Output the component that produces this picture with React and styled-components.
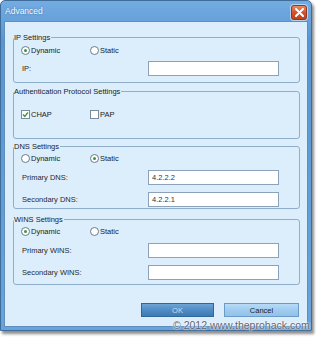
import React from "react";
import styled, { createGlobalStyle } from "styled-components";

const Global = createGlobalStyle`
  html, body {
    margin: 0;
    padding: 0;
    background: #fff;
  }
  body {
    font-family: "Liberation Sans", Arial, sans-serif;
  }
`;

const Page = styled.div`
  width: 316px;
  height: 337px;
  position: relative;
  overflow: hidden;
`;

const Window = styled.div`
  width: 312px;
  height: 331px;
  box-sizing: border-box;
  border: 1px solid #3e6d9c;
  border-radius: 5px 5px 0 0;
  background: linear-gradient(#74ace2, #5996d1 40px, #68a3db);
  padding: 0 3px 3px;
  display: flex;
  flex-direction: column;
  box-shadow: 2px 3px 3px rgba(0, 0, 0, 0.45);
`;

const TitleBar = styled.div`
  height: 20px;
  display: flex;
  align-items: center;
  justify-content: space-between;
  padding: 0 1px 0 1px;
`;

const Title = styled.span`
  font-size: 8.5px;
  color: #f4f9ff;
  text-shadow: 0 0 2px rgba(30, 70, 120, 0.5);
`;

const Close = styled.div`
  width: 16px;
  height: 15px;
  box-sizing: border-box;
  margin-top: 2px;
  border: 1px solid #8c3a22;
  border-radius: 3px;
  background: linear-gradient(#e98a66, #d4532c 50%, #c2401b);
  box-shadow: 0 0 0 1px rgba(255, 255, 255, 0.5);
  display: flex;
  align-items: center;
  justify-content: center;
`;

const Client = styled.div`
  flex: 1;
  border: 1px solid #5e8fbf;
  background: #dcedfb;
  padding: 11px 7px 0 8px;
  display: flex;
  flex-direction: column;
`;

const Group = styled.fieldset`
  margin: 0;
  margin-top: ${(p) => p.mt || 0}px;
  padding: 0;
  border: 1px solid #8eaecb;
  border-radius: 3px;
  min-width: 0;
`;

const Legend = styled.legend`
  margin-left: 0;
  padding: 0 1px 0 0;
  font-size: 7.5px;
  line-height: 9px;
  color: #1c1c1c;
`;

const Body = styled.div`
  display: flex;
  flex-direction: column;
  padding: ${(p) => p.pt || 0}px 0 ${(p) => p.pb || 0}px;
`;

const Row = styled.div`
  display: flex;
  align-items: center;
  height: ${(p) => p.h || 15}px;
  margin-top: ${(p) => p.mt || 0}px;
  padding-left: ${(p) => p.pl || 8}px;
`;

const Option = styled.label`
  display: flex;
  align-items: center;
  width: 69px;
  font-size: 7.5px;
  color: #222;
`;

const Radio = styled.span`
  width: 9px;
  height: 9px;
  box-sizing: border-box;
  border-radius: 50%;
  border: 1px solid #6e7f93;
  background: radial-gradient(circle, #fff 55%, #dfe6ee);
  margin-right: 1px;
  display: flex;
  align-items: center;
  justify-content: center;
  &::after {
    content: "";
    width: 3px;
    height: 3px;
    border-radius: 50%;
    background: ${(p) => (p.on ? "#2f9a3a" : "transparent")};
  }
`;

const Check = styled.span`
  width: 9px;
  height: 9px;
  box-sizing: border-box;
  border: 1px solid #7b8ba0;
  background: #fff;
  margin-right: 1px;
  display: flex;
  align-items: center;
  justify-content: center;
`;

const Label = styled.span`
  width: 126px;
  font-size: 7.5px;
  color: #2a2a2a;
`;

const Input = styled.div`
  width: 131px;
  height: 15px;
  box-sizing: border-box;
  border: 1px solid #8ba2ba;
  background: #fff;
  font-size: 7.5px;
  color: #333;
  padding-left: 3px;
  display: flex;
  align-items: center;
`;

const Buttons = styled.div`
  display: flex;
  justify-content: flex-end;
  gap: 10px;
  margin-top: 18px;
  padding-right: 1px;
`;

const Button = styled.div`
  width: ${(p) => p.w}px;
  height: 14px;
  box-sizing: border-box;
  border: 1px solid ${(p) => (p.primary ? "#2f669c" : "#6b9bc8")};
  background: ${(p) =>
    p.primary
      ? "linear-gradient(#6ea4d6, #4f8bc5 50%, #3f7ab6)"
      : "linear-gradient(#b8dbf6, #9fcbef 50%, #92c2ea)"};
  color: ${(p) => (p.primary ? "#c9dcee" : "#1e1e1e")};
  font-size: 7.5px;
  display: flex;
  align-items: center;
  justify-content: center;
`;

const Watermark = styled.div`
  position: absolute;
  left: 173px;
  top: 319px;
  font-size: 10.5px;
  line-height: 12px;
  color: #5e6670;
  white-space: nowrap;
  text-shadow: 0 0 2px #fff, 0 0 2px #fff;
`;

const RadioPair = ({ value }) => (
  <>
    <Option>
      <Radio on={value === "dynamic"} />
      Dynamic
    </Option>
    <Option>
      <Radio on={value === "static"} />
      Static
    </Option>
  </>
);

const Field = ({ label, value, mt }) => (
  <Row mt={mt}>
    <Label>{label}</Label>
    <Input>{value}</Input>
  </Row>
);

export default function App() {
  return (
    <Page>
      <Global />
      <Window>
        <TitleBar>
          <Title>Advanced</Title>
          <Close>
            <svg width="9" height="9" viewBox="0 0 9 9">
              <path d="M1 1 L8 8 M8 1 L1 8" stroke="#fff" strokeWidth="2" strokeLinecap="round" />
            </svg>
          </Close>
        </TitleBar>
        <Client>
          <Group>
            <Legend>IP Settings</Legend>
            <Body pb={6}>
              <Row h={16} pl={7}>
                <RadioPair value="dynamic" />
              </Row>
              <Field label="IP:" mt={3} />
            </Body>
          </Group>

          <Group mt={4}>
            <Legend>Authentication Protocol Settings</Legend>
            <Body pt={10} pb={16}>
              <Row h={16} pl={7}>
                <Option>
                  <Check>
                    <svg width="7" height="7" viewBox="0 0 7 7">
                      <path d="M1 3.6 L2.8 5.4 L6 1.4" fill="none" stroke="#2e9a3a" strokeWidth="1.4" />
                    </svg>
                  </Check>
                  CHAP
                </Option>
                <Option>
                  <Check />
                  PAP
                </Option>
              </Row>
            </Body>
          </Group>

          <Group mt={3}>
            <Legend>DNS Settings</Legend>
            <Body pb={1}>
              <Row pl={7}>
                <RadioPair value="static" />
              </Row>
              <Field label="Primary DNS:" value="4.2.2.2" mt={4} />
              <Field label="Secondary DNS:" value="4.2.2.1" mt={7} />
            </Body>
          </Group>

          <Group mt={6}>
            <Legend>WINS Settings</Legend>
            <Body pb={4}>
              <Row pl={7}>
                <RadioPair value="dynamic" />
              </Row>
              <Field label="Primary WINS:" mt={4} />
              <Field label="Secondary WINS:" mt={7} />
            </Body>
          </Group>

          <Buttons>
            <Button primary w={73}>OK</Button>
            <Button w={75}>Cancel</Button>
          </Buttons>
        </Client>
      </Window>
      <Watermark>© 2012 www.theprohack.com</Watermark>
    </Page>
  );
}
